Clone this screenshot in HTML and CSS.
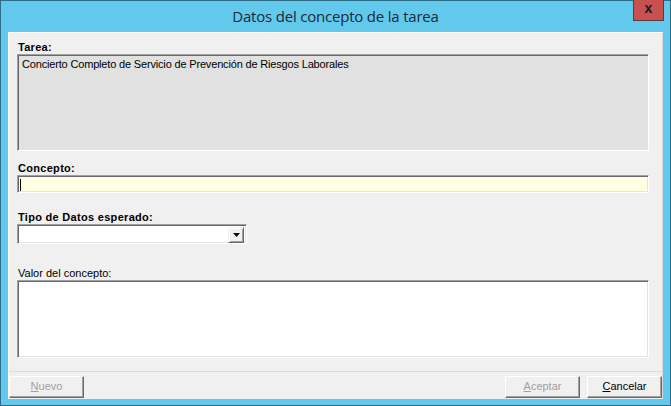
FILE: index.html
```html
<!DOCTYPE html>
<html lang="es">
<head>
<meta charset="utf-8">
<title>Datos del concepto de la tarea</title>
<link rel="stylesheet" href="styles.css">
</head>
<body>
<div class="window">
  <div class="titlebar">
    <span class="title">Datos del concepto de la tarea</span>
    <div class="close">x</div>
  </div>
  <div class="client">
    <div class="form">
      <div class="label bold">Tarea:</div>
      <div class="sunken tarea">Concierto Completo de Servicio de Prevención de Riesgos Laborales</div>

      <div class="label bold l-concepto">Concepto:</div>
      <div class="sunken concepto"><span class="caret"></span></div>

      <div class="label bold l-tipo">Tipo de Datos esperado:</div>
      <div class="sunken select">
        <div class="dropbtn">
          <svg width="7" height="4" viewBox="0 0 7 4"><polygon points="0,0 7,0 3.5,4" fill="#000"/></svg>
        </div>
      </div>

      <div class="label l-valor">Valor del concepto:</div>
      <div class="sunken valor"></div>
    </div>
    <div class="buttons">
      <div class="btn disabled"><u>N</u>uevo</div>
      <div class="spacer"></div>
      <div class="btn disabled"><u>A</u>ceptar</div>
      <div class="btn"><u>C</u>ancelar</div>
    </div>
  </div>
</div>
</body>
</html>
```
FILE: styles.css
```css
html, body {
  margin: 0;
  padding: 0;
  background: #62c9ec;
}
.window {
  width: 671px;
  height: 406px;
  box-sizing: border-box;
  border: 1px solid #2b6d86;
  background: #62c9ec;
  display: flex;
  flex-direction: column;
  font-family: "Liberation Sans", Arial, sans-serif;
  font-size: 11px;
  color: #000;
}
.titlebar {
  height: 31px;
  position: relative;
  display: flex;
  align-items: center;
  justify-content: center;
  flex: none;
}
.title {
  font-family: "Open Sans", "Noto Sans", sans-serif;
  font-size: 15px;
  color: #1b2a36;
  margin-top: -2px;
  letter-spacing: -0.2px;
}
.close {
  position: absolute;
  top: -1px;
  right: 6px;
  width: 31px;
  height: 21px;
  box-sizing: border-box;
  border: 1px solid #5a3a3a;
  border-top: none;
  background: #c75050;
  color: #1a1a1a;
  font-family: "Liberation Sans", Arial, sans-serif;
  font-weight: bold;
  font-size: 14px;
  line-height: 17px;
  text-align: center;
}
.client {
  flex: 1;
  margin: 0 7px 7px 7px;
  background: #f0f0f0;
  border-top: 1px solid #ffffff;
  border-left: 1px solid #ffffff;
  border-right: 1px solid #dadada;
  display: flex;
  flex-direction: column;
}
.form {
  flex: 1;
  padding: 8px 13px 0 8px;
  display: flex;
  flex-direction: column;
}
.label {
  height: 13px;
  line-height: 13px;
  padding-left: 1px;
}
.bold {
  font-weight: bold;
  letter-spacing: 0.3px;
}
.sunken {
  box-sizing: border-box;
  border-top: 1px solid #a0a0a0;
  border-left: 1px solid #a0a0a0;
  border-right: 1px solid #ffffff;
  border-bottom: 1px solid #ffffff;
  box-shadow: inset 1px 1px 0 #696969, inset -1px -1px 0 #e3e3e3;
}
.tarea {
  height: 97px;
  background: #e1e1e1;
  padding: 3px 4px;
  line-height: 13px;
  letter-spacing: -0.17px;
}
.l-concepto { margin-top: 11px; }
.concepto {
  height: 18px;
  background: #ffffe1;
  position: relative;
}
.caret {
  position: absolute;
  left: 2px;
  top: 3px;
  width: 1px;
  height: 12px;
  background: #000;
}
.l-tipo { margin-top: 18px; }
.select {
  width: 230px;
  height: 20px;
  background: #ffffff;
  display: flex;
  justify-content: flex-end;
  padding: 2px;
}
.dropbtn {
  width: 16px;
  height: 16px;
  box-sizing: border-box;
  background: #f0f0f0;
  border-top: 1px solid #f0f0f0;
  border-left: 1px solid #f0f0f0;
  border-right: 1px solid #696969;
  border-bottom: 1px solid #696969;
  box-shadow: inset 1px 1px 0 #ffffff, inset -1px -1px 0 #a0a0a0;
  display: flex;
  align-items: center;
  justify-content: center;
}
.l-valor { margin-top: 23px; }
.valor {
  height: 78px;
  background: #ffffff;
}
.buttons {
  height: 28px;
  box-sizing: border-box;
  margin-top: 13px;
  border-top: 1px solid #dcdcdc;
  padding-top: 4px;
  display: flex;
  gap: 7px;
  flex: none;
}
.spacer { flex: 1; }
.btn {
  width: 75px;
  height: 22px;
  box-sizing: border-box;
  background: #f0f0f0;
  border-top: 1px solid #ffffff;
  border-left: 1px solid #ffffff;
  border-right: 1px solid #696969;
  border-bottom: 1px solid #696969;
  box-shadow: inset -1px -1px 0 #a0a0a0;
  text-align: center;
  line-height: 19px;
  font-size: 11px;
  color: #000;
}
.btn.disabled { color: #a0a0a0; }
```
